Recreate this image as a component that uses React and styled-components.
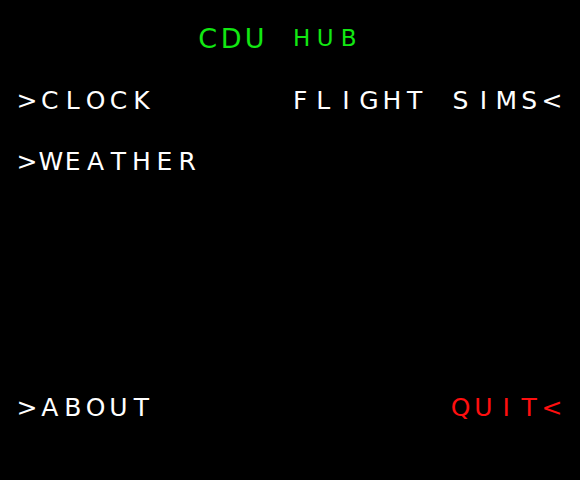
import React from "react";
import styled, { createGlobalStyle } from "styled-components";

const GlobalStyle = createGlobalStyle`
  html, body {
    margin: 0;
    padding: 0;
    background: #000;
  }
`;

const COLORS = {
  white: "#ffffff",
  green: "#12e812",
  red: "#ff0f0f",
};

const Screen = styled.div`
  width: 580px;
  height: 480px;
  background: #000;
  box-sizing: border-box;
  padding-top: 8px;
  font-family: "DejaVu Sans", "Liberation Sans", sans-serif;
  overflow: hidden;
`;

const Row = styled.div`
  height: 61.5px;
  line-height: 61.5px;
  display: flex;
  justify-content: ${(p) => (p.$center ? "flex-start" : "space-between")};
  padding-left: ${(p) => (p.$center ? "196px" : "15.5px")};
  width: ${(p) => (p.$center ? "auto" : "548px")};
  white-space: pre;
`;

const Field = styled.div`
  display: flex;
  align-items: baseline;
`;

const Cell = styled.span`
  display: inline-block;
  width: ${(p) => p.$w || 22.9}px;
  text-align: center;
  font-size: ${(p) => (p.$small ? 23 : p.$big ? 27 : 25)}px;
  color: ${(p) => COLORS[p.$color || "white"]};
`;

const Text = ({ children, color, small, big, w }) => (
  <Field>
    {children.split("").map((ch, i) => (
      <Cell key={i} $color={color} $small={small} $big={big} $w={w}>
        {ch}
      </Cell>
    ))}
  </Field>
);

const App = () => {
  return (
    <>
      <GlobalStyle />
      <Screen>
        <Row $center>
          <Text color="green" big w={23.5}>
            {"CDU "}
          </Text>
          <Text color="green" small w={23.5}>
            HUB
          </Text>
        </Row>
        <Row>
          <Text>{">CLOCK"}</Text>
          <Text>{"FLIGHT SIMS<"}</Text>
        </Row>
        <Row>
          <Text>{">WEATHER"}</Text>
        </Row>
        <Row />
        <Row />
        <Row />
        <Row>
          <Text>{">ABOUT"}</Text>
          <Text color="red">{"QUIT<"}</Text>
        </Row>
      </Screen>
    </>
  );
};

export default App;
